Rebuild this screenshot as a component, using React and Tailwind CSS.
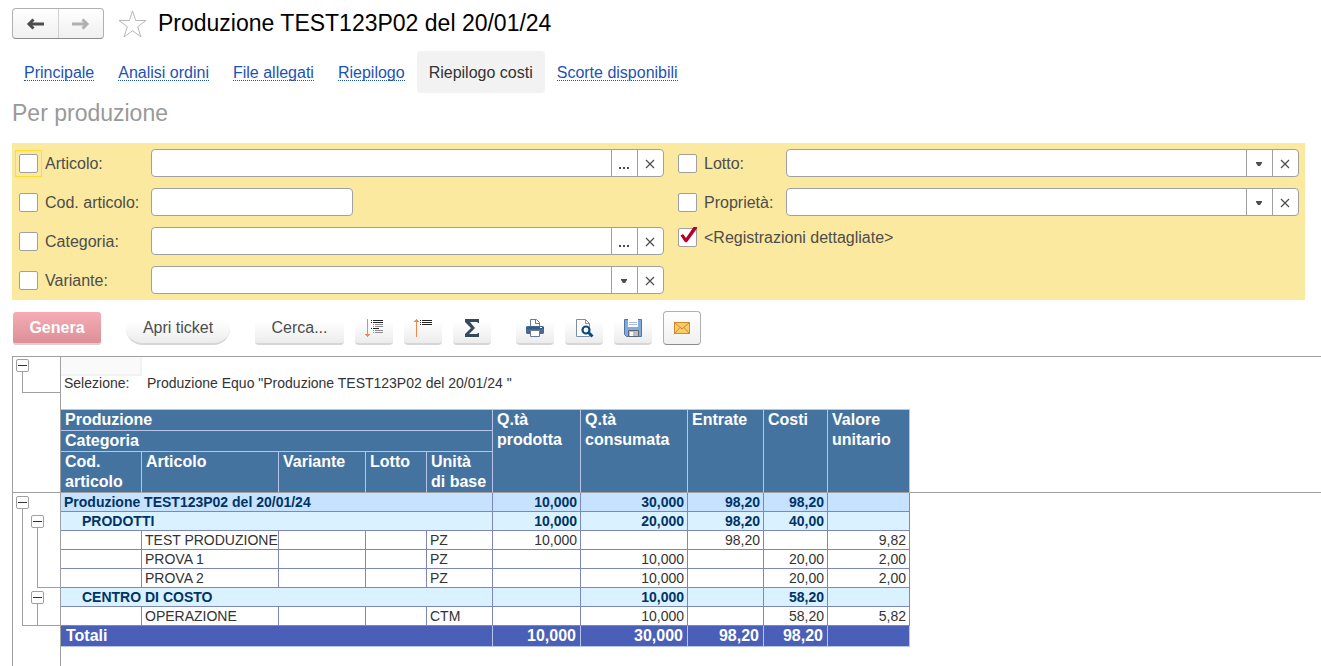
import React from 'react';
import clsx from 'clsx';

const tabs = ['Principale', 'Analisi ordini', 'File allegati', 'Riepilogo', 'Riepilogo costi', 'Scorte disponibili'];

const rows = [
  { type: 'root', label: 'Produzione TEST123P02 del 20/01/24', values: ['10,000', '30,000', '98,20', '98,20', ''] },
  { type: 'group', label: 'PRODOTTI', values: ['10,000', '20,000', '98,20', '40,00', ''] },
  { type: 'item', label: 'TEST PRODUZIONE', unit: 'PZ', values: ['10,000', '', '98,20', '', '9,82'] },
  { type: 'item', label: 'PROVA 1', unit: 'PZ', values: ['', '10,000', '', '20,00', '2,00'] },
  { type: 'item', label: 'PROVA 2', unit: 'PZ', values: ['', '10,000', '', '20,00', '2,00'] },
  { type: 'group', label: 'CENTRO DI COSTO', values: ['', '10,000', '', '58,20', ''] },
  { type: 'item', label: 'OPERAZIONE', unit: 'CTM', values: ['', '10,000', '', '58,20', '5,82'] },
];

const Checkbox = ({ id, checked = false, focused = false }) => (
  <span
    className={clsx(
      'relative block w-[19px] h-[19px] shrink-0',
      focused && 'outline outline-1 outline-offset-3 outline-[#ffdc2e]'
    )}
  >
    <input
      id={id}
      type="checkbox"
      defaultChecked={checked}
      className="peer block appearance-none w-[19px] h-[19px] bg-white border border-[#a0a0a0] rounded-[2px]"
    />
    <svg className="absolute -top-px left-0 w-[20px] h-[20px] pointer-events-none hidden peer-checked:block" viewBox="0 0 20 20">
      <path d="M2.500 8.500 5 7l3 4L15.500 0H19v1.500L9.500 14.500 8 15.500 6.500 14.500z" fill="#b3002d" />
    </svg>
  </span>
);

const Cross = () => (
  <svg width="10" height="10" viewBox="0 0 10 10" fill="none" stroke="#4d4d4d" strokeWidth="1.200">
    <path d="M1 1l8 8M9 1l-8 8" />
  </svg>
);

/* Campo con eventuale pulsante di scelta e di cancellazione */
const Field = ({ id, action }) => (
  <div className="flex flex-1 min-w-0 h-7 bg-white border border-[#a0a0a0] rounded-[4px] overflow-hidden">
    <input id={id} type="text" className="flex-1 min-w-0 px-1 outline-none" />
    {action === 'dots' && (
      <button className="flex items-end justify-center w-[26px] pb-[7px] pr-px border-l border-[#a0a0a0]" aria-label="Scegli">
        <svg width="12" height="2" viewBox="0 0 12 2" fill="#4d4d4d">
          <path d="M1 0h2v2H1zM5 0h2v2H5zM9 0h2v2H9z" />
        </svg>
      </button>
    )}
    {action === 'list' && (
      <button className="flex items-center justify-center w-[26px] pt-px pr-px border-l border-[#a0a0a0]" aria-label="Apri elenco">
        <svg width="6" height="4" viewBox="0 0 6 4" fill="#4d4d4d">
          <path d="M0 0h6v1L4 4H2L0 1z" />
        </svg>
      </button>
    )}
    <button className="flex items-center justify-center w-[26px] pt-px pr-px border-l border-[#a0a0a0]" aria-label="Cancella">
      <Cross />
    </button>
  </div>
);

const FilterRow = ({ id, label, action, focused, labelWidth }) => (
  <div className="flex items-center">
    <div className={clsx('flex items-center gap-[7px] shrink-0', labelWidth)}>
      <Checkbox id={`${id}-on`} focused={focused} />
      <label htmlFor={`${id}-on`} className="pt-px">{label}</label>
    </div>
    {action === 'plain' ? (
      <input id={id} type="text" aria-label={label} className="w-[202px] h-7 px-1 bg-white border border-[#a0a0a0] rounded-[4px]" />
    ) : (
      <Field id={id} action={action} />
    )}
  </div>
);

const IconButton = ({ label, framed, children }) => (
  <button
    aria-label={label}
    title={label}
    className={clsx(
      'flex items-center justify-center w-[38px]',
      framed
        ? 'h-[34px] rounded-[4px] border border-[#b0b0b0] border-b-[#8c8c8c] bg-linear-to-b from-white to-[#f0f0f0]'
        : 'h-[33px] pt-px rounded-b-[4px] border-b-2 border-[#d6d6d6] bg-linear-to-b from-white from-30% to-[#ececec]'
    )}
  >
    {children}
  </button>
);

const Toggle = () => (
  <button className="flex items-center justify-center w-[13px] h-[13px] shrink-0 bg-white border border-[#a0a0a0] rounded-[2px]" aria-label="Comprimi">
    <span className="w-[9px] h-px bg-[#333333]" />
  </button>
);

/* Pulsante con la linea che chiude il gruppo */
const Branch = ({ className, children }) => (
  <div className={clsx('flex flex-col', className)}>
    <Toggle />
    <div className="flex-1 ml-1.5 border-l border-b border-[#a0a0a0]">{children}</div>
  </div>
);

const headCell = 'px-1 py-0 text-left align-top font-bold border-r border-[#b9c4ea]';
const bodyCell = 'px-[3px] py-0 border-r border-b border-[#7c87bd]';

const ReportRow = ({ row, gutter }) => {
  const isItem = row.type === 'item';
  return (
    <tr
      className={clsx(
        'h-[19px]',
        row.type === 'root' && 'bg-[#c6e2ff] font-bold text-[#003366]',
        row.type === 'group' && 'bg-[#daf1ff] font-bold text-[#003366]',
        isItem && 'text-[#333333]'
      )}
    >
      {gutter}
      {isItem ? (
        <>
          <td className={bodyCell}></td>
          <td className={clsx(bodyCell, 'whitespace-nowrap')}>{row.label}</td>
          <td className={bodyCell}></td>
          <td className={bodyCell}></td>
          <td className={bodyCell}>{row.unit}</td>
        </>
      ) : (
        <td colSpan={5} className={clsx(bodyCell, row.type === 'group' && 'pl-[21px]')}>{row.label}</td>
      )}
      {row.values.map((value, i) => (
        <td key={i} className={clsx(bodyCell, 'text-right')}>{value}</td>
      ))}
      <td className="bg-white"></td>
    </tr>
  );
};

const Report = () => (
  <table className="w-full table-fixed border-separate border-spacing-0 text-sm leading-[18px]">
    <colgroup>
      <col className="w-[48px]" />
      <col className="w-[81px]" />
      <col className="w-[137px]" />
      <col className="w-[87px]" />
      <col className="w-[61px]" />
      <col className="w-[66px]" />
      <col className="w-[88px]" />
      <col className="w-[107px]" />
      <col className="w-[76px]" />
      <col className="w-[64px]" />
      <col className="w-[82px]" />
      <col />
    </colgroup>
    <thead>
      <tr className="h-[19px]">
        <td rowSpan={6} className="p-0 align-top border-r border-b border-[#a0a0a0]">
          <Branch className="h-[34px] mt-0.5 ml-[3px]" />
        </td>
        <td className="p-0 bg-[#fafafa] border-r-2 border-b-2 border-[#f2f2f2]"></td>
        <td colSpan={9}></td>
        <td rowSpan={6} className="border-b border-[#a0a0a0]"></td>
      </tr>
      <tr className="h-[16px] leading-[14px] text-[#333333]">
        <td className="px-[3px] py-0 align-top">Selezione:</td>
        <td colSpan={9} className="px-[5px] py-0 align-top">Produzione Equo "Produzione TEST123P02 del 20/01/24 "</td>
      </tr>
      <tr className="h-[17px]">
        <td colSpan={10}></td>
      </tr>
      <tr className="bg-[#4573a0] text-white text-base leading-[20px]">
        <th colSpan={5} className={clsx(headCell, 'border-t border-b')}>Produzione</th>
        <th rowSpan={3} className={clsx(headCell, 'border-t border-b border-b-[#a0a0a0]')}>Q.tà prodotta</th>
        <th rowSpan={3} className={clsx(headCell, 'border-t border-b border-b-[#a0a0a0]')}>Q.tà consumata</th>
        <th rowSpan={3} className={clsx(headCell, 'border-t border-b border-b-[#a0a0a0]')}>Entrate</th>
        <th rowSpan={3} className={clsx(headCell, 'border-t border-b border-b-[#a0a0a0]')}>Costi</th>
        <th rowSpan={3} className={clsx(headCell, 'border-t border-b border-b-[#a0a0a0]')}>Valore unitario</th>
      </tr>
      <tr className="bg-[#4573a0] text-white text-base leading-[20px]">
        <th colSpan={5} className={clsx(headCell, 'border-b')}>Categoria</th>
      </tr>
      <tr className="bg-[#4573a0] text-white text-base leading-[20px]">
        <th className={clsx(headCell, 'border-b border-b-[#a0a0a0]')}>Cod. articolo</th>
        <th className={clsx(headCell, 'border-b border-b-[#a0a0a0]')}>Articolo</th>
        <th className={clsx(headCell, 'border-b border-b-[#a0a0a0]')}>Variante</th>
        <th className={clsx(headCell, 'border-b border-b-[#a0a0a0]')}>Lotto</th>
        <th className={clsx(headCell, 'border-b border-b-[#a0a0a0]')}>Unità di base</th>
      </tr>
    </thead>
    <tbody>
      {rows.map((row, i) => (
        <ReportRow
          key={i}
          row={row}
          gutter={
            i === 0 && (
              <td rowSpan={7} className="p-0 align-top bg-white border-r border-[#a0a0a0]">
                <Branch className="h-[130px] mt-[3px] ml-[3px]">
                  <Branch className="h-[73px] mt-1.5 ml-2" />
                  <Branch className="h-[35px] mt-[3px] -mb-px ml-2" />
                </Branch>
              </td>
            )
          }
        />
      ))}
      <tr className="bg-[#4a60b8] text-white text-base leading-[20px] font-bold">
        <td className="bg-white border-r border-[#a0a0a0]"></td>
        <td colSpan={5} className="px-[5px] py-0 border-r border-b border-[#b9c4ea]">Totali</td>
        {['10,000', '30,000', '98,20', '98,20', ''].map((value, i) => (
          <td key={i} className="px-1 py-0 text-right border-r border-b border-[#b9c4ea]">{value}</td>
        ))}
        <td className="bg-white"></td>
      </tr>
    </tbody>
  </table>
);

const Toolbar = () => (
  <div className="flex items-end gap-[25px] mt-[11px] ml-px">
    <button className="w-[88px] h-[33px] rounded-[3px] border-b-2 border-[#d9d0d1] bg-linear-to-b from-[#f5adb5] to-[#dd8f97] text-white font-bold">Genera</button>
    <button className="w-[104px] h-[33px] rounded-full border-b-2 border-[#d6d6d6] bg-linear-to-b from-white from-30% to-[#ececec]">Apri ticket</button>
    <div className="flex items-end gap-[11px]">
      <button className="w-[89px] h-[33px] rounded-b-[4px] border-b-2 border-[#d6d6d6] bg-linear-to-b from-white from-30% to-[#ececec]">Cerca...</button>
      <IconButton label="Espandi gruppi">
        <svg width="20" height="20" viewBox="0 0 20 20" shapeRendering="crispEdges">
          <path d="M3 1h1v18H3zM1 16h5v1H1zM2 17h3v1H2z" fill="#f08a4b" />
          <path d="M7 2h1v1H7zM9 2h10v1H9zM7 4h1v1H7zM9 4h10v1H9zM7 10h1v1H7zM9 10h6v1H9z" fill="#222222" />
          <path d="M9 6h1v1H9zM11 6h8v1h-8zM9 8h1v1H9zM11 8h8v1h-8zM9 12h1v1H9zM11 12h8v1h-8zM9 14h1v1H9zM11 14h8v1h-8z" fill="#8c8c94" />
        </svg>
      </IconButton>
      <IconButton label="Comprimi gruppi">
        <svg width="20" height="20" viewBox="0 0 20 20" shapeRendering="crispEdges">
          <path d="M3 1h1v18H3zM2 2h3v1H2zM1 3h5v1H1z" fill="#f08a4b" />
          <path d="M7 2h1v1H7zM9 2h10v1H9zM7 4h1v1H7zM9 4h10v1H9zM7 6h1v1H7zM9 6h10v1H9z" fill="#222222" />
        </svg>
      </IconButton>
      <IconButton label="Somma">
        <svg width="16" height="20" viewBox="0 0 16 20">
          <path d="M1 1h14v4h-1l-1-1H6l5 6-6 6h8l1-1h1v4H1v-3l6-6-6-6z" fill="#34495e" />
        </svg>
      </IconButton>
    </div>
    <div className="flex items-end gap-[11px]">
      <IconButton label="Stampa">
        <svg width="20" height="20" viewBox="0 0 20 20">
          <path d="M5.500 8.500v-7h6l3 3v4" fill="#ffffff" stroke="#6b7b8f" />
          <path d="M10.500 1.500v4h4" fill="none" stroke="#6b7b8f" />
          <rect x="1" y="8" width="18" height="8" rx="1.500" fill="#466a94" />
          <path d="M1 10h18" stroke="#2d4a70" />
          <rect x="15" y="9" width="2" height="1" fill="#ffffff" />
          <path d="M5.500 12.500h9v6h-9z" fill="#ffffff" stroke="#6b7b8f" />
        </svg>
      </IconButton>
      <IconButton label="Anteprima di stampa">
        <svg width="20" height="20" viewBox="0 0 20 20">
          <path d="M2.500 1.500h9l4 4v13h-13z" fill="#ffffff" stroke="#7d8fa3" />
          <path d="M11.500 1.500v4h4" fill="none" stroke="#7d8fa3" />
          <circle cx="12" cy="12" r="3.500" fill="#ffffff" stroke="#0b4a80" strokeWidth="2.200" />
          <path d="M14.500 14.500l4 4" stroke="#0b4a80" strokeWidth="3" />
        </svg>
      </IconButton>
      <IconButton label="Salva">
        <svg width="20" height="20" viewBox="0 0 20 20">
          <path d="M1.500 1.500h17v17h-15l-2-2z" fill="#82aadb" stroke="#4c76ab" />
          <path d="M5 1h10v8H5z" fill="#ffffff" />
          <path d="M6 4.500h8M6 6.500h8" stroke="#a9bdd6" />
          <path d="M5.500 12.500h10v6h-10z" fill="#b9bec4" stroke="#5f6670" />
          <path d="M7 14h3v4H7z" fill="#ffffff" />
        </svg>
      </IconButton>
      <IconButton label="Invia per e-mail" framed>
        <svg width="18" height="14" viewBox="0 0 18 14">
          <rect x="1.500" y="1.500" width="15" height="11" fill="#f8cc68" stroke="#cf8a2c" />
          <path d="M2 2l7 6 7-6M2 12l5-5.500M16 12l-5-5.500" fill="none" stroke="#cf8a2c" />
        </svg>
      </IconButton>
    </div>
  </div>
);

const App = () => {
  return (
    <div className="flex flex-col min-h-screen pt-2 pl-3 bg-white text-base leading-[20px] text-[#4d4d4d] font-['Liberation_Sans',Arial,sans-serif]">
      {/* Titolo con navigazione */}
      <header className="flex items-center h-[31px]">
        <div className="flex w-[92px] h-[31px] border border-[#b0b0b0] border-b-[#8c8c8c] rounded-[4px] bg-linear-to-b from-white to-[#f0f0f0]">
          <button className="flex flex-1 items-center justify-center border-r border-[#d0d0d0]" aria-label="Indietro">
            <svg width="18" height="12" viewBox="0 0 18 12" fill="none" stroke="#4d4d4d" strokeWidth="3">
              <path d="M3 6h15" />
              <path d="M7.500 1.500L3 6l4.500 4.500" strokeWidth="3" />
            </svg>
          </button>
          <button className="flex flex-1 items-center justify-center" aria-label="Avanti">
            <svg width="18" height="12" viewBox="0 0 18 12" fill="none" stroke="#b0b0b0" strokeWidth="3">
              <path d="M0 6h15" />
              <path d="M10.500 1.500L15 6l-4.500 4.500" strokeWidth="3" />
            </svg>
          </button>
        </div>
        <button className="ml-3.5" aria-label="Aggiungi ai preferiti">
          <svg width="30" height="30" viewBox="0 0 30 30" fill="#ffffff" stroke="#b8b8b8">
            <path d="M14.500 2l3.200 9.500h10.300l-8.300 6.200 3.300 10.300-8.500-6.300-8.500 6.300 3.300-10.300-8.300-6.200h10.300z" />
          </svg>
        </button>
        <h1 className="ml-[10px] pb-0.5 text-[23px] leading-[28px] text-black">Produzione TEST123P02 del 20/01/24</h1>
      </header>

      <nav className="flex mt-3">
        {tabs.map((tab) =>
          tab === 'Riepilogo costi' ? (
            <a key={tab} href="#" aria-current="page" className="flex items-center h-[42px] pt-0.5 px-3 rounded-[4px] bg-[#f2f2f2] text-[#333333]">{tab}</a>
          ) : (
            <a key={tab} href="#" className="flex items-center h-[42px] pt-0.5 px-3 text-[#1d52b5]">
              <span className="leading-[15px] border-b border-dotted border-[#1d52b5]">{tab}</span>
            </a>
          )
        )}
      </nav>

      <h2 className="mt-1.5 text-[23px] leading-[28px] text-[#999999]">Per produzione</h2>

      {/* Filtri */}
      <section className="grid grid-cols-[645fr_621fr] gap-x-3.5 mt-4 mr-4 pt-1.5 pb-1.5 pl-[7px] pr-1.5 bg-[#fbe99f]">
        <div className="flex flex-col gap-[11px]">
          <FilterRow id="articolo" label="Articolo:" action="dots" labelWidth="w-[132px]" focused />
          <FilterRow id="cod-articolo" label="Cod. articolo:" action="plain" labelWidth="w-[132px]" />
          <FilterRow id="categoria" label="Categoria:" action="dots" labelWidth="w-[132px]" />
          <FilterRow id="variante" label="Variante:" action="list" labelWidth="w-[132px]" />
        </div>
        <div className="flex flex-col gap-[11px]">
          <FilterRow id="lotto" label="Lotto:" action="list" labelWidth="w-[108px]" />
          <FilterRow id="proprieta" label="Proprietà:" action="list" labelWidth="w-[108px]" />
          <div className="flex items-center gap-[7px]">
            <Checkbox id="registrazioni" checked />
            <label htmlFor="registrazioni" className="pt-px">&lt;Registrazioni dettagliate&gt;</label>
          </div>
        </div>
      </section>

      <Toolbar />

      {/* Report */}
      <main className="flex flex-col flex-1 mt-[11px] border-t border-l border-[#a0a0a0]">
        <Report />
        <div className="flex-1 w-[48px] border-r border-[#a0a0a0]"></div>
      </main>
    </div>
  );
};

export default App;
